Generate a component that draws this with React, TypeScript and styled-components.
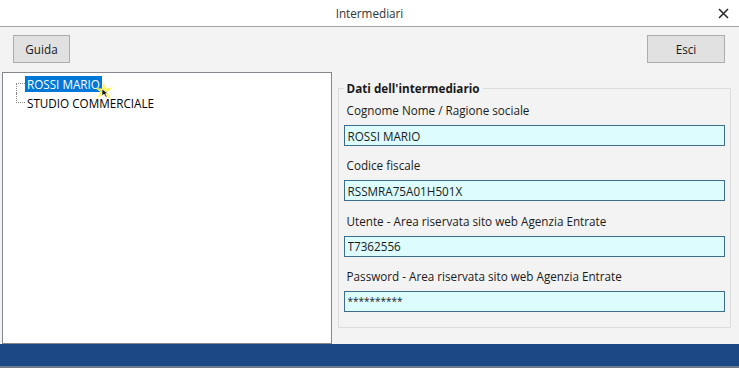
import React from 'react';
import styled, { createGlobalStyle } from 'styled-components';

const GlobalStyle = createGlobalStyle`
    html, body {
        margin: 0;
        padding: 0;
        background: #f3f3f3;
    }
    body {
        font-family: "Open Sans", "Noto Sans", sans-serif;
        font-size: 11.7px;
        color: #1a1a1a;
    }
`

const Window = styled.div`
    width: 739px;
    height: 368px;
    display: flex;
    flex-flow: column nowrap;
    background: #f3f3f3;
    overflow: hidden;
`

const TitleBar = styled.div`
    height: 26px;
    flex: none;
    background: #ffffff;
    border-bottom: 1px solid #a3a3a3;
    display: flex;
    align-items: center;
    justify-content: center;
    position: relative;
    color: #333;
`

const CloseBtn = styled.span`
    position: absolute;
    right: 10px;
    top: 8px;
    width: 11px;
    height: 11px;
    display: flex;
`

const Toolbar = styled.div`
    display: flex;
    justify-content: space-between;
    padding: 8px 14px 0 13px;
    height: 28px;
    flex: none;
`

const Button = styled.button<{ $w: number }>`
    width: ${p => p.$w}px;
    height: 28px;
    background: #e1e1e1;
    border: 1px solid #adadad;
    font-family: inherit;
    font-size: 11.7px;
    color: #1a1a1a;
    padding: 0;
`

const Main = styled.div`
    display: flex;
    gap: 6px;
    padding: 9px 8px 0 2px;
    height: 271px;
    flex: none;
`

const Tree = styled.div`
    width: 328px;
    height: 269px;
    background: #fff;
    border: 1px solid #828790;
    padding: 1px 0 0 0;
    position: relative;
`

const TreeItem = styled.div<{ $first?: boolean; $last?: boolean }>`
    height: 19px;
    display: flex;
    align-items: center;
    padding-left: 22px;
    position: relative;

    &:before {
        content: "";
        position: absolute;
        left: 13px;
        top: 9px;
        width: 9px;
        border-top: 1px dotted #8a8a8a;
    }

    &:after {
        content: "";
        position: absolute;
        left: 13px;
        top: ${p => (p.$first ? '9px' : '0')};
        height: ${p => (p.$first || p.$last ? '10px' : '19px')};
        border-left: 1px dotted #8a8a8a;
    }
`

const ItemText = styled.span<{ $selected?: boolean }>`
    line-height: 16px;
    padding: 0 2px;
    background: ${p => (p.$selected ? '#0078d7' : 'transparent')};
    color: ${p => (p.$selected ? '#fff' : '#000')};
`

const Pointer = styled.svg`
    position: absolute;
    left: 91px;
    top: 9px;
`

const Group = styled.fieldset`
    margin: 8px 0 0 0;
    width: 382px;
    height: 226px;
    border: 1px solid #dcdcdc;
    padding: 6px 5px 14px 5px;
    display: flex;
    flex-flow: column nowrap;
    box-sizing: content-box;

    legend {
        font-weight: bold;
        padding: 0 3px;
        line-height: 16px;
        color: #1a1a1a;
    }
`

const FieldLabel = styled.div`
    line-height: 16px;
    padding-left: 3px;
    margin-bottom: 7px;
`

const Input = styled.input<{ $secret?: boolean }>`
    height: 21px;
    box-sizing: border-box;
    border: 1px solid #3d6d8b;
    background: #dcfcfe;
    font-family: inherit;
    font-size: ${p => (p.$secret ? '10px' : '11.7px')};
    padding: 0 3px;
    margin: 0 0 11.3px 0;
    color: #1a1a1a;
    outline: none;

    &:last-child {
        margin-bottom: 0;
    }
`

const Footer = styled.div`
    flex: none;
    height: 22px;
    margin-top: 1px;
    background: #1c4886;
    border-bottom: 2px solid #6b7b8e;
`

const fields = [
    { label: 'Cognome Nome / Ragione sociale', value: 'ROSSI MARIO' },
    { label: 'Codice fiscale', value: 'RSSMRA75A01H501X' },
    { label: 'Utente - Area riservata sito web Agenzia Entrate', value: 'T7362556' },
    { label: 'Password - Area riservata sito web Agenzia Entrate', value: '**********', secret: true },
]

export default function App() {
    return (
        <Window>
            <GlobalStyle />
            <TitleBar>
                Intermediari
                <CloseBtn>
                    <svg width="11" height="11" viewBox="0 0 11 11">
                        <path d="M1 1 L10 10 M10 1 L1 10" stroke="#2b2b2b" strokeWidth="1.6" />
                    </svg>
                </CloseBtn>
            </TitleBar>
            <Toolbar>
                <Button $w={57}>Guida</Button>
                <Button $w={78}>Esci</Button>
            </Toolbar>
            <Main>
                <Tree>
                    <TreeItem $first>
                        <ItemText $selected>ROSSI MARIO</ItemText>
                    </TreeItem>
                    <TreeItem $last>
                        <ItemText>STUDIO COMMERCIALE</ItemText>
                    </TreeItem>
                    <Pointer width="20" height="18" viewBox="0 0 20 18">
                        <path d="M10 1 L12 6.5 L19 5 L13.5 10 L17 17 L10 12.5 L3 16 L6.5 10 L1 6 L8 6.5 Z" fill="#fff64a" opacity="0.9" />
                        <path d="M8 7 L8 14 L10 12 L12 15.5 L13 15 L11.5 11.5 L14 11.5 Z" fill="#111" stroke="#fff" strokeWidth="0.6" />
                    </Pointer>
                </Tree>
                <Group>
                    <legend>Dati dell'intermediario</legend>
                    {fields.map((f, i) => (
                        <React.Fragment key={i}>
                            <FieldLabel>{f.label}</FieldLabel>
                            <Input readOnly value={f.value} $secret={f.secret} />
                        </React.Fragment>
                    ))}
                </Group>
            </Main>
            <Footer />
        </Window>
    )
}
